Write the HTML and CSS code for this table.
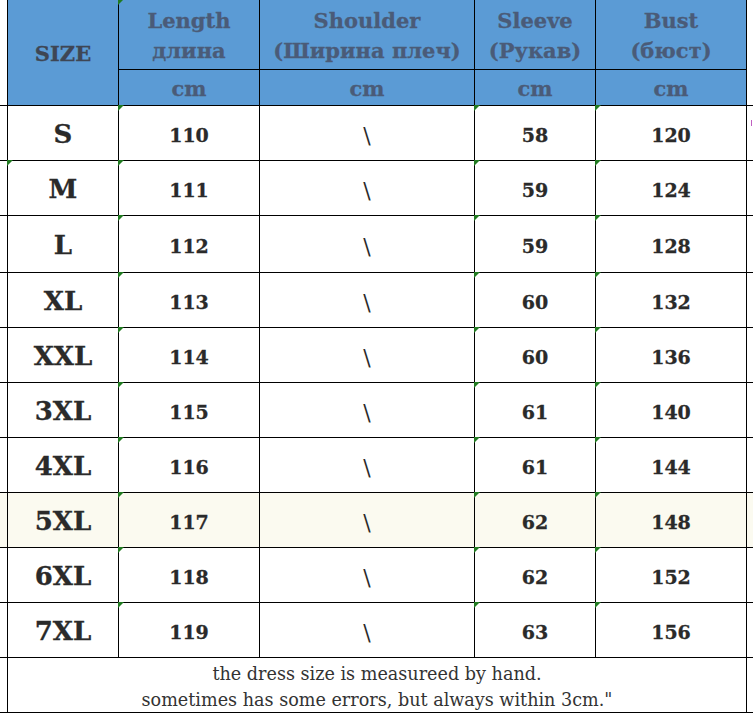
FILE: index.html
```html
<!DOCTYPE html>
<html>
<head>
<meta charset="utf-8">
<link rel="stylesheet" href="styles.css">
</head>
<body>
<div class="sheet">
  <div class="gut gut-head-l"></div>
  <div class="hd size-hd">SIZE</div>
  <div class="hd title flag">Length<br>длина</div>
  <div class="hd title">Shoulder<br>(Ширина плеч)</div>
  <div class="hd title">Sleeve<br>(Рукав)</div>
  <div class="hd title">Bust<br>(бюст)</div>
  <div class="gut gut-head-r"></div>
  <div class="hd unit">cm</div>
  <div class="hd unit">cm</div>
  <div class="hd unit">cm</div>
  <div class="hd unit">cm</div>

  <div class="gut"></div><div class="c sz">S</div><div class="c n flag">110</div><div class="c bs">\</div><div class="c n flag">58</div><div class="c n flag">120</div><div class="gut"><span class="tick"></span></div>
  <div class="gut"></div><div class="c sz flag">M</div><div class="c n flag">111</div><div class="c bs">\</div><div class="c n flag">59</div><div class="c n flag">124</div><div class="gut"></div>
  <div class="gut"></div><div class="c sz">L</div><div class="c n flag">112</div><div class="c bs">\</div><div class="c n flag">59</div><div class="c n flag">128</div><div class="gut"></div>
  <div class="gut"></div><div class="c sz">XL</div><div class="c n flag">113</div><div class="c bs">\</div><div class="c n flag">60</div><div class="c n flag">132</div><div class="gut"></div>
  <div class="gut"></div><div class="c sz">XXL</div><div class="c n flag">114</div><div class="c bs">\</div><div class="c n flag">60</div><div class="c n flag">136</div><div class="gut"></div>
  <div class="gut"></div><div class="c sz">3XL</div><div class="c n flag">115</div><div class="c bs">\</div><div class="c n flag">61</div><div class="c n flag">140</div><div class="gut"></div>
  <div class="gut"></div><div class="c sz">4XL</div><div class="c n flag">116</div><div class="c bs">\</div><div class="c n flag">61</div><div class="c n flag">144</div><div class="gut"></div>
  <div class="gut hl"></div><div class="c sz hl">5XL</div><div class="c n flag hl">117</div><div class="c bs hl">\</div><div class="c n flag hl">62</div><div class="c n flag hl">148</div><div class="gut hl"></div>
  <div class="gut"></div><div class="c sz">6XL</div><div class="c n flag">118</div><div class="c bs">\</div><div class="c n flag">62</div><div class="c n flag">152</div><div class="gut"></div>
  <div class="gut"></div><div class="c sz">7XL</div><div class="c n flag">119</div><div class="c bs">\</div><div class="c n flag">63</div><div class="c n flag">156</div><div class="gut"></div>

  <div class="gut"></div>
  <div class="note">the dress size is measureed by hand.<br>sometimes has some errors, but always within 3cm."</div>
  <div class="gut"></div>
</div>
</body>
</html>
```
FILE: styles.css
```css
html, body {
  margin: 0;
  padding: 0;
  background: #ffffff;
}
.sheet {
  width: 753px;
  display: grid;
  grid-template-columns: 7px 110px 140px 214px 120px 150px 1fr;
  grid-template-rows: 69px 35px 54px 54px 56px 54px 54px 54px 54px 54px 54px 54px 54px;
  gap: 1px;
  background: #000;
  border-bottom: 1px solid #000;
  font-family: "DejaVu Serif", "Liberation Serif", serif;
}
.sheet > div {
  position: relative;
  display: flex;
  align-items: center;
  justify-content: center;
  text-align: center;
  background: #fff;
}
.gut-head-l, .gut-head-r {
  grid-row: span 2;
}
.hd {
  background: #5b9bd5 !important;
  font-weight: bold;
  color: #4a5b78;
  font-size: 21px;
  -webkit-text-stroke: 0.3px #4a5b78;
}
.size-hd {
  grid-row: span 2;
  color: #3e4654;
  font-size: 21px;
  -webkit-text-stroke: 0.3px #3e4654;
  padding-top: 2px;
}
.title {
  line-height: 30px;
  padding-top: 2px;
}
.unit {
  padding-top: 2px;
}
.c {
  color: #2a2a2a;
  font-weight: bold;
  -webkit-text-stroke: 0.3px #2a2a2a;
}
.sz {
  font-size: 26px;
  padding-top: 2px;
}
.n {
  font-size: 19px;
  padding-top: 4px;
}
.bs {
  font-weight: normal !important;
  font-size: 22px;
  padding-top: 4px;
  -webkit-text-stroke: 0;
}
.hl {
  background: #fbfaf0 !important;
}
.note {
  grid-column: 2 / 7;
  font-size: 17.6px;
  line-height: 26px;
  color: #333;
  padding-top: 4px;
}
.flag::before {
  content: "";
  position: absolute;
  left: -1px;
  top: -1px;
  width: 0;
  height: 0;
  border-top: 6px solid #217a21;
  border-right: 6px solid transparent;
}
.tick {
  position: absolute;
  right: 1px;
  top: 14px;
  width: 1px;
  height: 6px;
  background: #c060c0;
}
```
